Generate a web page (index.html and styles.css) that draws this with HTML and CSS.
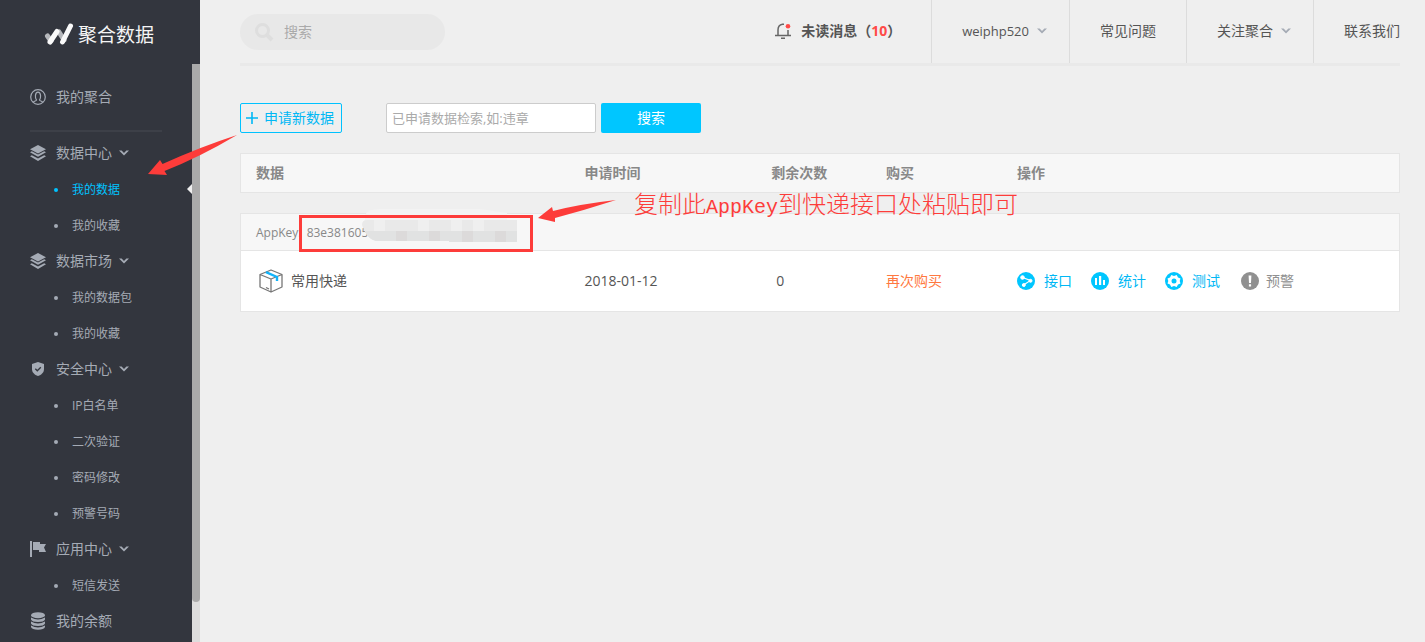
FILE: index.html
```html
<!DOCTYPE html>
<html lang="zh-CN">
<head>
<meta charset="utf-8">
<title>聚合数据 - 我的数据</title>
<link rel="stylesheet" href="styles.css">
</head>
<body>
<svg class="defs" aria-hidden="true">
  <symbol id="layers" viewBox="0 0 16 16"><path d="M8 0 16 4.2 8 8.4 0 4.2Z"/><path d="M0 7.2 1.800 6.300 8 9.600 14.200 6.300 16 7.200 8 11.700Z"/><path d="M0 11.200 1.800 10.300 8 13.600 14.200 10.300 16 11.200 8 16Z"/></symbol>
  <symbol id="down" viewBox="0 0 10 6"><path d="M0 .6H2.6L5 2.9 7.4.6H10L5 5.6Z"/></symbol>
</svg>
<div class="app">
  <aside class="sidebar">
    <a class="logo" href="#">
      <svg width="30" height="24" viewBox="0 0 30 24" fill="none" stroke-linecap="round" stroke-width="5"><path d="M3.500 13 7 18M15 9 20 17" stroke="#b5b7bb"/><path d="M6 19 13 8.500M18.500 19 26.500 3" stroke="#fafafa"/></svg>
      <span>聚合数据</span>
    </a>
    <div class="side-body">
      <nav class="menu">
        <a class="item" href="#"><svg class="ico" viewBox="0 0 16 16" fill="none" stroke="currentColor" stroke-width="1.200"><circle cx="8" cy="8" r="7.300"/><path d="M3.200 13.300C4 12 6.500 12 6.500 11 5 9.500 4.700 3.200 8 3.200S11 9.500 9.500 11C9.500 12 12 12 12.800 13.300"/></svg>我的聚合</a>
        <hr class="rule">
        <a class="item" href="#"><svg class="ico"><use href="#layers"/></svg>数据中心<svg class="chev"><use href="#down"/></svg></a>
        <a class="sub active" href="#">我的数据</a>
        <a class="sub" href="#">我的收藏</a>
        <a class="item" href="#"><svg class="ico"><use href="#layers"/></svg>数据市场<svg class="chev"><use href="#down"/></svg></a>
        <a class="sub" href="#">我的数据包</a>
        <a class="sub" href="#">我的收藏</a>
        <a class="item" href="#"><svg class="ico" viewBox="0 0 16 16"><path d="M8 1 14 3V8C14 11.500 11.500 13.800 8 15 4.500 13.800 2 11.500 2 8V3Z"/><path d="M5.300 7.800 7.300 9.800 10.800 6.300" fill="none" stroke="#33363e" stroke-width="1.300"/></svg>安全中心<svg class="chev"><use href="#down"/></svg></a>
        <a class="sub" href="#">IP白名单</a>
        <a class="sub" href="#">二次验证</a>
        <a class="sub" href="#">密码修改</a>
        <a class="sub" href="#">预警号码</a>
        <a class="item" href="#"><svg class="ico" viewBox="0 0 16 16"><path d="M0 0H2V16H0ZM3 1H10V3H16L14 6.500 16 11H9V9H3Z"/></svg>应用中心<svg class="chev"><use href="#down"/></svg></a>
        <a class="sub" href="#">短信发送</a>
        <a class="item" href="#"><svg class="ico tall" viewBox="0 0 16 18"><ellipse cx="8" cy="3.200" rx="7" ry="3"/><path d="M1 5.500Q8 9.500 15 5.500V7.500Q14 10 8 10T1 7.500ZM1 9.500Q8 13.500 15 9.500V11.500Q14 14 8 14T1 11.500ZM1 13.500Q8 17.500 15 13.500V15Q14 17.800 8 17.800T1 15Z"/></svg>我的余额</a>
      </nav>
      <div class="track"><div class="thumb"></div></div>
    </div>
  </aside>
  <main class="main">
    <header class="top">
      <label class="finder">
        <svg width="20" height="20" viewBox="0 0 20 20" fill="none" stroke="#dedede" stroke-width="3"><circle cx="8.500" cy="8.500" r="6"/><path d="M13 13 18 18" stroke-width="4"/></svg>
        <input type="search" placeholder="搜索" aria-label="搜索">
      </label>
      <nav class="links">
        <a class="notice" href="#"><svg width="16" height="16" viewBox="0 0 16 16" fill="none" stroke="#666" stroke-width="1.500"><path d="M9 1.200H7.500Q3 2 3 7V12M13 7V12M0 12.500H16M6 15.200H10"/><circle cx="13" cy="3.300" r="2.300" fill="#ff4a47" stroke="none"/></svg><span>未读消息（<em>10</em>）</span></a>
        <a class="drop user" href="#">weiphp520<svg class="chev"><use href="#down"/></svg></a>
        <a href="#">常见问题</a>
        <a class="drop" href="#">关注聚合<svg class="chev"><use href="#down"/></svg></a>
        <a class="last" href="#">联系我们</a>
      </nav>
    </header>
    <form class="tools">
      <button class="apply" type="button"><svg width="12" height="12" viewBox="0 0 12 12" stroke="currentColor" stroke-width="1.600"><path d="M6 0V12M0 6H12"/></svg>申请新数据</button>
      <input class="query" type="text" placeholder="已申请数据检索,如:违章" aria-label="已申请数据检索">
      <button class="go" type="button">搜索</button>
    </form>
    <table class="data">
      <colgroup><col class="c1"><col class="c2"><col class="c3"><col class="c4"><col class="c5"></colgroup>
      <thead><tr><th>数据</th><th>申请时间</th><th>剩余次数</th><th>购买</th><th>操作</th></tr></thead>
      <tbody>
        <tr class="space"><td colspan="5"></td></tr>
        <tr class="key"><td colspan="5">AppKey: <span class="code">83e381605</span></td></tr>
        <tr class="row">
          <td><div class="name"><svg width="24" height="24" viewBox="0 0 24 24" fill="none" stroke="#777" stroke-width="1.300" stroke-linejoin="round"><path d="M12 1 23 5.500V18L12 23 1 18V5.500ZM1 5.500 12 10 23 5.500M12 10V23M7 18.500 10 20"/><path d="M7 3.200 18 8V12" stroke="#12b3fa" stroke-width="2.400"/></svg>常用快递</div></td>
          <td>2018-01-12</td>
          <td class="count">0</td>
          <td><a class="buy" href="#">再次购买</a></td>
          <td><div class="acts">
            <a href="#"><svg viewBox="0 0 18 18"><circle cx="9" cy="9" r="9"/><g fill="#fff" stroke="#fff"><path d="M5.500 5.500 13.500 8.500 6.500 13" fill="none" stroke-width="1.100"/><circle cx="5.500" cy="5.500" r="1.800"/><circle cx="13.500" cy="8.800" r="1.500"/><circle cx="6.800" cy="13" r="1.500"/></g></svg>接口</a>
            <a href="#"><svg viewBox="0 0 18 18"><circle cx="9" cy="9" r="9"/><path d="M4 6H6V13H4ZM8 4H10.200V13H8ZM12 8H14V13H12Z" fill="#fff"/></svg>统计</a>
            <a href="#"><svg viewBox="0 0 18 18"><circle cx="9" cy="9" r="9"/><path d="M6.300 3 9 4 11.700 3 13 5.500 15.500 6.500 14.700 9 15.500 11.500 13 12.500 11.700 15 9 14 6.300 15 5 12.500 2.500 11.500 3.300 9 2.500 6.500 5 5.500Z" fill="#fff"/><circle cx="9" cy="9" r="2.500"/></svg>测试</a>
            <a class="warn" href="#"><svg viewBox="0 0 18 18"><circle cx="9" cy="9" r="9"/><path d="M7.600 3.500H10.400L10 11H8ZM7.900 12.300H10.100V14.500H7.900Z" fill="#fff"/></svg>预警</a>
          </div></td>
        </tr>
      </tbody>
    </table>
  </main>
  <svg class="marks" width="1040" height="320" viewBox="0 0 1040 320" aria-hidden="true">
    <path d="M365 215Q367 209 380 209H480L507 213V220H365Z" fill="#f3f3f3"/>
    <path d="M362 225Q362 220 367 220H517V242H449V241H376Q366 238 362 225Z" fill="#e9e9e9"/>
    <path d="M365 231H517V242H449V241H376Q368 239 365 231Z" fill="#e1e2e2"/>
    <path d="M396 231H407V241H396ZM429 231H440V241H429ZM462 231H473V242H462ZM495 231H506V242H495Z" fill="#dcdada"/>
    <path d="M374 220H385V231H374ZM418 220H429V231H418ZM451 220H462V231H451ZM473 220H484V231H473Z" fill="#efefef"/>
    <rect x="300.500" y="216.500" width="231" height="34" fill="none" stroke="#fd3c3a" stroke-width="3"/>
    <path d="M148 174 160 160 162.500 164Q200 147 237 135 200 157 164.500 171L167 175ZM538 218 552 207 553 211Q580 204 616 200 585 210 555 218L555 222Z" fill="#fd3c3a"/>
  </svg>
  <p class="tip">复制此<span>AppKey</span>到快递接口处粘贴即可</p>
</div>
</body>
</html>
```
FILE: styles.css
```css
* { box-sizing: border-box; }
body { margin: 0; background: #efefef; color: #555; font: 14px/20px "Open Sans", "Noto Sans CJK SC", sans-serif; }
a { color: inherit; text-decoration: none; }
input, button { font: inherit; margin: 0; outline: none; }
input::placeholder { color: #aaa; opacity: 1; }
.defs { position: absolute; width: 0; height: 0; }
.app { position: relative; display: flex; height: 100vh; overflow: hidden; }

.sidebar { flex: none; display: flex; flex-direction: column; width: 200px; background: #33363e; color: #a5abb5; }
.logo { flex: none; display: flex; align-items: center; gap: 4px; height: 64px; padding: 6px 0 0 44px; color: #f5f5f5; font-size: 19px; white-space: nowrap; }
.side-body { flex: 1; display: flex; min-height: 0; }
.menu { flex: 1; padding-top: 15px; overflow: hidden; }
.item { display: flex; align-items: center; height: 36px; padding-left: 30px; }
.ico { width: 16px; height: 16px; margin-right: 10px; fill: currentColor; }
.ico[fill="none"] { fill: none; }
.ico.tall { height: 18px; }
.chev { width: 10px; height: 6px; margin-left: 7px; fill: currentColor; }
.rule { width: 132px; height: 2px; margin: 15px 0 3px 30px; border: 0; background: #3d4048; }
.sub { position: relative; display: flex; align-items: center; gap: 14px; height: 36px; padding: 2px 0 0 54px; font-size: 12px; }
.sub::before { content: ""; width: 4px; height: 4px; border-radius: 50%; background: currentColor; }
.active { color: #00c2ff; }
.active::after { content: ""; position: absolute; right: 0; top: 13px; border: 5px solid transparent; border-right-color: #efefef; border-left: 0; }
.track { width: 8px; background: #ddd; }
.thumb { height: 93%; border-radius: 0 0 4px 4px; background: #aaa; }

.main { flex: 1; min-width: 0; padding: 0 25px 0 40px; }
.top { display: flex; justify-content: space-between; height: 66px; border-bottom: 3px solid #e9e9e9; }
.finder { display: flex; align-items: center; gap: 10px; width: 205px; height: 36px; margin-top: 14px; padding: 0 14px; border-radius: 18px; background: #e8e8e8; }
.finder input { width: 120px; padding: 0; border: 0; background: none; }
.links { display: flex; white-space: nowrap; }
.links a { display: flex; align-items: center; padding: 0 30px 2px; border-left: 1px solid #dcdcdc; }
.links .drop { padding-right: 22px; }
.links .drop .chev { margin-left: 8px; fill: #a5abb5; }
.links .user { font-size: 13px; }
.links .last { padding-right: 0; }
.links .notice { gap: 10px; border: 0; font-weight: bold; }
.notice em { color: #ff4a47; font-style: normal; }

.tools { display: flex; height: 30px; margin: 37px 0 20px; }
.apply { display: flex; align-items: center; gap: 6px; width: 102px; margin-right: 44px; padding: 0 5px; border: 1px solid #00c2ff; border-radius: 2px; background: none; color: #00b8f5; white-space: nowrap; }
.query { width: 210px; margin-right: 5px; padding: 0 5px; border: 1px solid #ccc; border-radius: 2px; background: #fff; font-size: 13px; }
.go { width: 100px; padding: 0; border: 0; border-radius: 2px; background: #00c6ff; color: #fff; }

.data { width: 100%; table-layout: fixed; border-spacing: 0; }
.c1 { width: 28.4%; }
.c2 { width: 16.1%; }
.c3 { width: 9.9%; }
.c4 { width: 11.3%; }
.data th, .data td { padding: 0 0 0 15px; text-align: left; white-space: nowrap; }
.data th { height: 40px; border: solid #e5e5e5; border-width: 1px 0; background: #f7f7f7; color: #888; }
.data th:first-child, .key td, .row td:first-child { border-left: 1px solid #e5e5e5; }
.data th:last-child, .key td, .row td:last-child { border-right: 1px solid #e5e5e5; }
.space td { height: 20px; }
.data .key td { height: 38px; padding-top: 2px; border-top: 1px solid #e5e5e5; border-bottom: 1px solid #e5e5e5; background: #f7f7f7; color: #888; font-size: 12px; }
.code { margin-left: 2px; }
.row td { height: 61px; border-bottom: 1px solid #e5e5e5; background: #fff; }
.data .count { padding-left: 20px; }
.name { display: flex; align-items: center; gap: 8px; padding-left: 3px; }
.buy { color: #ff7840; }
.acts { display: flex; gap: 19px; color: #00b8f5; }
.acts a { display: flex; align-items: center; gap: 9px; }
.acts svg { width: 18px; height: 18px; fill: #00c6ff; }
.acts .warn { gap: 7px; margin-left: 2px; color: #909090; }
.acts .warn svg { fill: #909090; }

.marks { position: absolute; left: 0; top: 0; pointer-events: none; }
.tip { position: absolute; left: 634px; top: 189px; margin: 0; color: #fd3c3a; font: 300 24px/28px "Noto Sans CJK SC", sans-serif; white-space: nowrap; }
.tip span { font: 20px/28px "Liberation Mono", monospace; }
```
